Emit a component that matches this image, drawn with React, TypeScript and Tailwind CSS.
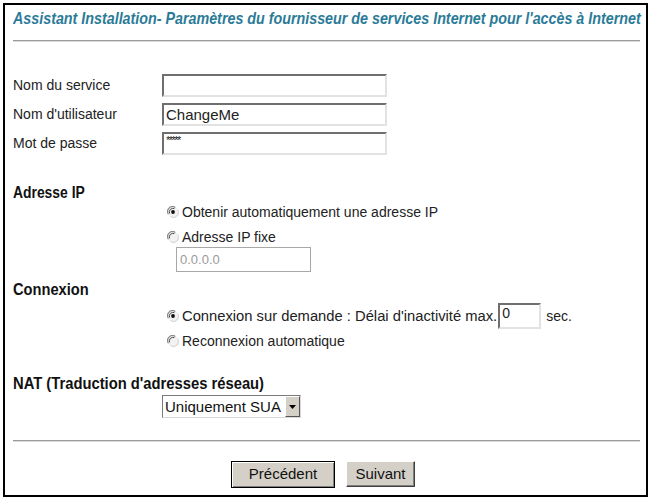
import React, { useLayoutEffect, useRef, useState } from "react";

const sans = "font-['Liberation_Sans',Arial,sans-serif]";

// squeezes a line of text to a given width (stands in for Arial Narrow)
function Fit({ width, className, children }: { width: number; className?: string; children: React.ReactNode }) {
  const ref = useRef<HTMLSpanElement>(null);
  const [s, setS] = useState(0.9);
  useLayoutEffect(() => {
    if (ref.current) setS(width / ref.current.offsetWidth);
  }, [width]);
  return (
    <span
      ref={ref}
      className={`inline-block origin-left whitespace-nowrap ${className ?? ""}`}
      style={{ transform: `scaleX(${s})` }}
    >
      {children}
    </span>
  );
}

function Radio({ checked }: { checked?: boolean }) {
  return (
    <svg width="12" height="12" viewBox="0 0 12 12" className="shrink-0">
      <circle cx="6" cy="6" r="5.5" fill="#f2f2f2" />
      <path d="M1.4 8.3 A5 5 0 0 1 8.3 1.4" stroke="#8a8a8a" strokeWidth="1.2" fill="none" />
      <path d="M2.6 7.4 A3.7 3.7 0 0 1 7.4 2.6" stroke="#4a4a4a" strokeWidth="1" fill="none" />
      <path d="M3.7 10.6 A5 5 0 0 0 10.6 3.7" stroke="#d8d8d8" strokeWidth="1.2" fill="none" />
      {checked && <circle cx="6" cy="6" r="1.9" fill="#111" />}
    </svg>
  );
}

const inset =
  "bg-white border-2 border-t-[#6f6f6f] border-l-[#6f6f6f] border-b-[#e2e2e2] border-r-[#e2e2e2]";

function TextBox({ value, password }: { value?: string; password?: boolean }) {
  return (
    <div className={`h-[23px] w-[225px] ${inset} px-[2px] flex ${password ? "items-start" : "items-center"} text-[15px] text-[#222] leading-none`}>
      {password ? (
        <span className="text-[11px] leading-[10px] tracking-[-1.5px] mt-[1px] text-[#222]">*****</span>
      ) : (
        value
      )}
    </div>
  );
}

function Heading({ children, width }: { children: React.ReactNode; width: number }) {
  return (
    <div className="h-[18px] leading-[18px] overflow-hidden">
      <Fit width={width} className="font-bold text-[16px] text-[#111]">
        {children}
      </Fit>
    </div>
  );
}

export default function App() {
  return (
    <div className={`w-[651px] h-[499px] bg-white p-[3px] overflow-hidden ${sans}`}>
      <div className="h-[494px] w-[645px] border-2 border-black pl-[8px] pr-[4px] flex flex-col">
        <div className="h-[26px] pt-[4px] leading-[20px] overflow-hidden">
          <Fit width={628} className="italic font-bold text-[17px] text-[#2b7b98]">
            Assistant Installation- Paramètres du fournisseur de services Internet pour l'accès à Internet
          </Fit>
        </div>
        <div className="mt-[9px] h-[2px] mr-[2px] border-t border-t-[#9a9a9a] border-b border-b-[#dcdcdc]" />

        <div className="mt-[32px] grid grid-cols-[149px_1fr] gap-y-[6px] text-[14px] text-[#222] items-center">
          <span>Nom du service</span>
          <TextBox />
          <span>Nom d'utilisateur</span>
          <TextBox value="ChangeMe" />
          <span>Mot de passe</span>
          <TextBox password />
        </div>

        <div className="mt-[29px]">
          <Heading width={72}>Adresse IP</Heading>
        </div>
        <div className="pl-[154px] text-[14px] text-[#222]">
          <div className="mt-[1px] h-[18px] flex items-center gap-[3px]">
            <Radio checked />
            <span>Obtenir automatiquement une adresse IP</span>
          </div>
          <div className="mt-[7px] h-[18px] flex items-center gap-[3px]">
            <Radio />
            <span>Adresse IP fixe</span>
          </div>
          <div className="ml-[9px] mt-[1px] h-[25px] w-[135px] border border-[#a8a8a8] bg-white flex items-center px-[3px] text-[13px] text-[#9a9a9a]">
            0.0.0.0
          </div>
        </div>

        <div className="mt-[9px]">
          <Heading width={76}>Connexion</Heading>
        </div>
        <div className="pl-[154px] text-[14px] text-[#222]">
          <div className="mt-[4px] h-[26px] flex items-center">
            <Radio checked />
            <span className="ml-[3px] text-[14.75px]">Connexion sur demande : Délai d'inactivité max.</span>
            <div className={`ml-[1px] h-[26px] w-[43px] ${inset} px-[2px] text-[14px] leading-[16px]`}>0</div>
            <span className="ml-[5px]">sec.</span>
          </div>
          <div className="mt-[3px] h-[18px] flex items-center gap-[3px]">
            <Radio />
            <span>Reconnexion automatique</span>
          </div>
        </div>

        <div className="mt-[25px]">
          <Heading width={251}>NAT (Traduction d'adresses réseau)</Heading>
        </div>
        <div className="pl-[149px] mt-[2px]">
          <div className="h-[23px] w-[139px] border border-t-[#7a7a7a] border-l-[#7a7a7a] border-b-[#d8d8d8] border-r-[#d8d8d8] bg-white flex items-stretch">
            <span className="flex-1 pl-[2px] text-[15px] leading-[21px] text-[#111] whitespace-nowrap overflow-hidden">
              Uniquement SUA
            </span>
            <span className="w-[15px] bg-[#d4d0c8] border border-t-white border-l-white border-b-[#555] border-r-[#555] flex items-center justify-center">
              <svg width="7" height="4" viewBox="0 0 7 4">
                <path d="M0 0 H7 L3.5 4 Z" fill="#000" />
              </svg>
            </span>
          </div>
        </div>

        <div className="mt-[22px] h-[2px] mr-[2px] border-t border-t-[#9a9a9a] border-b border-b-[#dcdcdc]" />

        <div className="mt-[19px] flex justify-center gap-[11px] pr-[9px] text-[15px] text-[#111]">
          <button className="h-[27px] w-[104px] bg-[#d4d0c8] border border-black shadow-[inset_1px_1px_0_#fff,inset_-1px_-1px_0_#808080]">
            Précédent
          </button>
          <button className="h-[26px] w-[69px] bg-[#d4d0c8] border border-t-white border-l-white border-b-[#404040] border-r-[#404040] shadow-[inset_-1px_-1px_0_#808080]">
            Suivant
          </button>
        </div>
      </div>
    </div>
  );
}
